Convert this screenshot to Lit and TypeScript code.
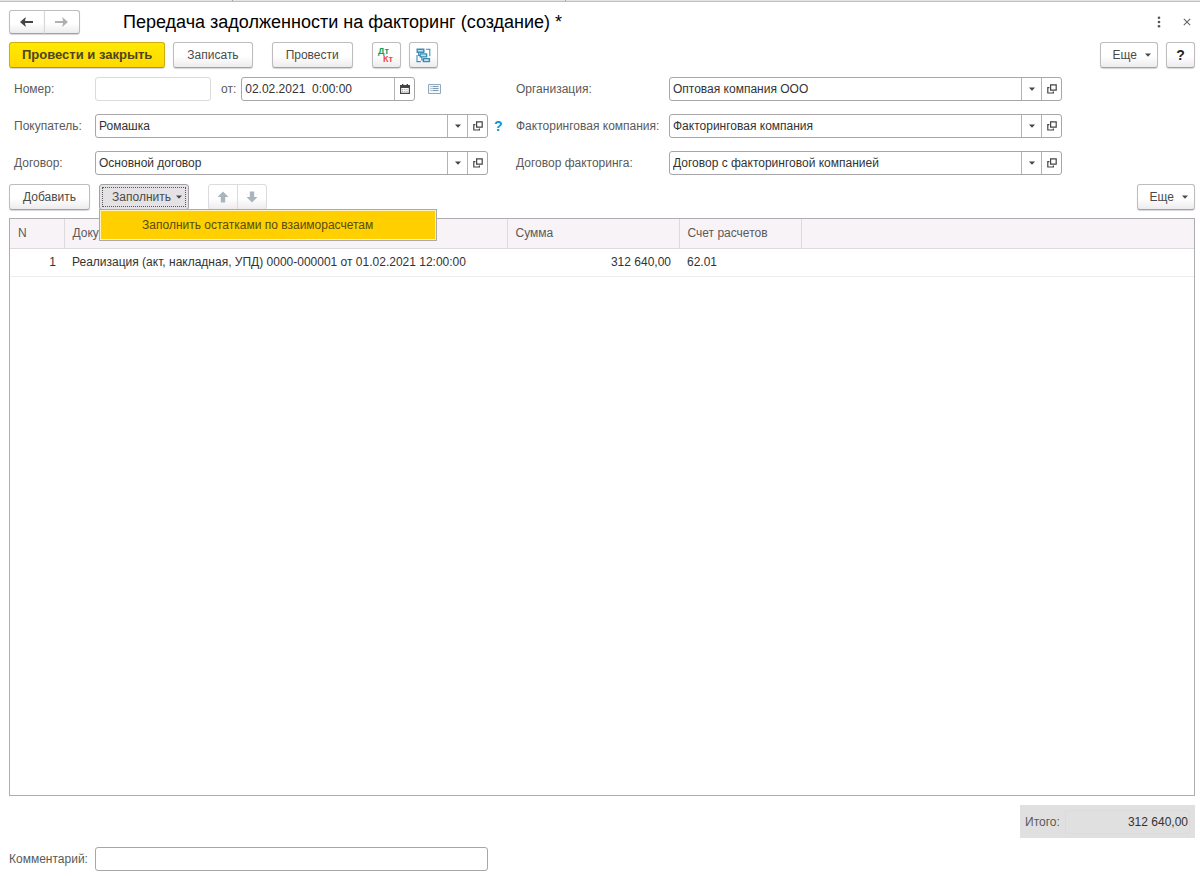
import { LitElement, html, css, svg, nothing } from "lit";
import { customElement, state } from "lit/decorators.js";

interface Row {
  n: number;
  doc: string;
  sum: string;
  account: string;
}

const caret = html`<svg class="caret" width="6" height="4" viewBox="0 0 6 4" aria-hidden="true"><path d="M0 0.5h6L3 3.8z" fill="currentColor" /></svg>`;

const openIcon = html`<svg width="10" height="10" viewBox="0 0 10 10" aria-hidden="true" fill="none" stroke="#444" stroke-width="1.2"><path d="M3.6 0.8h5.6v5.4H3.6z" /><path d="M2.4 3.6H0.8v5.4h5.6V7.6" /></svg>`;

const arrow = (d: string, fill: string, w = 14, h = 12) =>
  html`<svg width=${w} height=${h} viewBox="0 0 ${w} ${h}" aria-hidden="true">${svg`<path d=${d} fill=${fill} />`}</svg>`;

@customElement("app-root")
export class AppRoot extends LitElement {
  @state() private menuOpen = true;

  private rows: Row[] = [
    {
      n: 1,
      doc: "Реализация (акт, накладная, УПД) 0000-000001 от 01.02.2021 12:00:00",
      sum: "312 640,00",
      account: "62.01",
    },
  ];

  static styles = css`
    :host {
      display: flex;
      flex-direction: column;
      min-height: 100vh;
      box-sizing: border-box;
      background: #fff;
      color: #333;
      font: 12px/16px "Liberation Sans", Arial, sans-serif;
    }
    * { box-sizing: border-box; }
    button, input { font: inherit; color: inherit; margin: 0; }
    button { cursor: pointer; }
    svg { display: block; }
    .tabs { display: flex; height: 2px; background: #e6e3e3; border-bottom: 1px solid #c2bebe; }
    .tab { border-right: 1px solid #a5a1a1; width: 333px; }
    .tab.first { width: 233px; }
    .page { flex: 1; display: flex; flex-direction: column; padding: 7px 5px 5px 9px; }
    .bar { display: flex; align-items: center; }
    .spacer { flex: 1; }

    .title-bar { height: 25px; }
    .title { margin: 0 0 0 43px; font-size: 18px; line-height: 24px; font-weight: 400; color: #000; white-space: nowrap; }
    .group { display: flex; }
    .btn {
      display: inline-flex; align-items: center; justify-content: center;
      height: 26px; padding: 0 13px; gap: 5px; white-space: nowrap;
      color: #4a4a4a;
      background: linear-gradient(#fff 55%, #eeebee);
      border: 1px solid #bfbcbf; border-bottom-color: #a3a0a3; border-radius: 3px;
      box-shadow: 0 1px 1px #d8d6d8;
    }
    .group .btn { border-radius: 3px 0 0 3px; width: 36px; padding: 0; height: 24px; }
    .group .btn + .btn { border-radius: 0 3px 3px 0; border-left-color: #d8d5d8; margin-left: -1px; }
    .ghost { background: none; border: 0; padding: 0; width: 16px; height: 24px; display: flex; align-items: center; justify-content: center; }
    .title-bar .ghost + .ghost { margin: 0 0 0 12px; }

    .commands { margin-top: 8px; }
    .primary {
      font-weight: 700; font-size: 13px; color: #4c4522; padding: 0 12px;
      background: linear-gradient(#ffe900, #ffd800);
      border-color: #cfae10; border-bottom-color: #b89600;
    }
    .save, .gap { margin-left: 8px; }
    .post { margin-left: 19px; }
    .square { width: 29px; padding: 0; }
    .more { padding: 0 6px 0 12px; gap: 8px; }
    .help { font-weight: 700; font-size: 14px; color: #222; }
    .ledger { margin-left: 19px; }

    .form {
      display: grid;
      grid-template-columns: 86px minmax(0, 393px) 28px 153px minmax(0, 393px) 1fr;
      row-gap: 13px;
      margin-top: 9px;
      align-items: center;
    }
    .form label, .comment label, .total label { color: #5a5a5a; white-space: nowrap; }
    .form .lead { padding-left: 5px; grid-column: 1; }
    .field {
      display: flex; height: 24px; min-width: 0;
      border: 1px solid #a8a6a8; border-radius: 3px; background: #fff;
    }
    .field input { flex: 1; min-width: 0; border: 0; outline: 0; background: none; padding: 0 3px; }
    .field button {
      width: 20px; flex: none; padding: 0; border: 0; border-left: 1px solid #b4b2b4; background: none;
      display: flex; align-items: center; justify-content: center; color: #444;
    }
    .field.left { grid-column: 2; }
    .field.right { grid-column: 5; }
    .form .right-label { grid-column: 4; }
    .number-row { display: flex; align-items: center; }
    .field.number { width: 116px; border-color: #dcdadc; }
    .number-row label { margin: 0 5px 0 10px; }
    .date { width: 174px; }
    .date input { white-space: pre; }
    .number-row .ghost { margin-left: 11px; }
    .hint { grid-column: 3; color: #0a94d6; font: 700 14px/16px "Liberation Sans", Arial, sans-serif; text-decoration: none; padding-left: 6px; }

    .table-bar { margin-top: 9px; }
    .menu-host { position: relative; margin-left: 9px; }
    .btn.pressed {
      background: #e4e2e4; border-color: #a3a0a3; padding: 0 6px 0 12px; box-shadow: none;
      outline: 1px dotted #555; outline-offset: -4px;
    }
    .menu {
      position: absolute; z-index: 2; top: 25px; left: 0; width: 338px;
      border: 1px solid #aaa; background: #fff3c0; padding: 1px;
    }
    .menu button { width: 100%; height: 28px; border: 0; background: #ffcf00; text-align: left; padding: 0 0 0 41px; color: #574a14; }
    .group.move { margin-left: 19px; }
    .group.move .btn { width: 30px; height: 26px; border-color: #dcdadc; box-shadow: none; }

    .grid { flex: 1; margin-top: 8px; border: 1px solid #aeacae; background: #fff; }
    table { width: 100%; border-collapse: collapse; table-layout: fixed; }
    .c-n { width: 54px; }
    .c-doc { width: 443px; }
    .c-sum { width: 172px; }
    .c-acc { width: 122px; }
    th { height: 29px; padding: 0 8px; text-align: left; font-weight: 400; color: #5a5a5a; background: #f8f3f7; border-right: 1px solid #dddadd; border-bottom: 1px solid #dddadd; }
    th:last-child { border-right: 0; }
    td { height: 28px; padding: 0 8px; border-bottom: 1px solid #efeded; white-space: nowrap; }
    .num { text-align: right; }

    .total { align-self: flex-end; margin-top: 9px; display: flex; align-items: center; width: 175px; height: 33px; padding: 0 5px; background: #e0e0e0; }
    .total input { flex: 1; min-width: 0; margin-left: 5px; height: 24px; border: 1px solid #dbdbdb; border-radius: 3px; background: none; text-align: right; padding: 0 1px; }
    .comment { margin-top: 9px; display: grid; grid-template-columns: 86px minmax(0, 393px); align-items: center; }
  `;

  private combo(id: string, label: string, value: string, side: "left" | "right") {
    return html`
      <label class=${side === "left" ? "lead" : "right-label"} for=${id}>${label}</label>
      <div class="field ${side}">
        <input id=${id} type="text" .value=${value} />
        <button aria-label="Выбрать">${caret}</button>
        <button aria-label="Открыть">${openIcon}</button>
      </div>
    `;
  }

  render() {
    return html`
      <div class="tabs"><span class="tab first"></span><span class="tab"></span></div>
      <main class="page">
        <header class="bar title-bar">
          <div class="group">
            <button class="btn" aria-label="Назад">${arrow("M0 6L5.8 1L5 4.9H13V7.1H5L5.8 11z", "#444")}</button>
            <button class="btn" aria-label="Вперед">${arrow("M13 6L7.2 1L8 4.9H0V7.1H8L7.2 11z", "#b0b0b0")}</button>
          </div>
          <h1 class="title">Передача задолженности на факторинг (создание) *</h1>
          <span class="spacer"></span>
          <button class="ghost" aria-label="Меню">
            <svg width="4" height="12" viewBox="0 0 4 12" fill="#555"><circle cx="2" cy="1.7" r="1.3" /><circle cx="2" cy="6" r="1.3" /><circle cx="2" cy="10.3" r="1.3" /></svg>
          </button>
          <button class="ghost" aria-label="Закрыть">
            <svg width="8" height="8" viewBox="0 0 8 8" stroke="#666" stroke-width="1.1"><path d="M0.8 0.8l6.4 6.4M7.2 0.8L0.8 7.2" /></svg>
          </button>
        </header>

        <div class="bar commands">
          <button class="btn primary">Провести и закрыть</button>
          <button class="btn save">Записать</button>
          <button class="btn post">Провести</button>
          <button class="btn square ledger" aria-label="Проводки">
            <svg width="20" height="18" viewBox="0 0 20 18" font-family="Liberation Sans, Arial, sans-serif" font-weight="700" font-size="9">
              <text x="2" y="8" fill="#0aa45a">Дт</text>
              <text x="7" y="16" fill="#f04848">Кт</text>
            </svg>
          </button>
          <button class="btn square gap" aria-label="Структура подчиненности">
            <svg width="15" height="15" viewBox="0 0 15 15" fill="none" stroke="#3a8db5" stroke-width="1.4">
              <path d="M1.2 1.2h6.6v3H1.2zM4.2 5.9h6.4v3H4.2zM7.4 10.6h6v3h-6z" fill="#c4e2ef" />
              <path d="M10 1.2h3.8v7M1 7v6.6h3.8M2.6 4.2v3.2h1.6M5.8 8.8v3.2h1.6" stroke-width="1.1" />
            </svg>
          </button>
          <span class="spacer"></span>
          <button class="btn more">Еще ${caret}</button>
          <button class="btn square help gap" aria-label="Справка">?</button>
        </div>

        <section class="form">
          <label class="lead" for="number">Номер:</label>
          <div class="number-row">
            <div class="field number"><input id="number" type="text" /></div>
            <label for="date">от:</label>
            <div class="field date">
              <input id="date" type="text" .value=${"02.02.2021  0:00:00"} />
              <button aria-label="Календарь">
                <svg width="10" height="10" viewBox="0 0 10 10"><path d="M0.6 1.6h8.8v7.8H0.6z" fill="#fff" stroke="#444" stroke-width="1.2" /><path d="M0 1h10v3H0z" fill="#444" /><path d="M2 0h1.4v2H2zM6.6 0H8v2H6.6z" fill="#444" /><path d="M2 5.6h6M2 7.4h6" stroke="#999" stroke-width="0.9" stroke-dasharray="1.2 1" /></svg>
              </button>
            </div>
            <button class="ghost" aria-label="Список">
              <svg width="13" height="10" viewBox="0 0 13 10"><path d="M0.5 0.5h12v9H0.5z" fill="#f1f6fa" stroke="#93a9bb" /><path d="M2.5 2.5h1M4.5 2.5h6M2.5 4.5h1M4.5 4.5h6M2.5 6.5h1M4.5 6.5h6" stroke="#7f9bb3" /></svg>
            </button>
          </div>
          ${this.combo("org", "Организация:", "Оптовая компания ООО", "right")}
          ${this.combo("buyer", "Покупатель:", "Ромашка", "left")}
          <a class="hint" href="#" aria-label="Подсказка">?</a>
          ${this.combo("factor", "Факторинговая компания:", "Факторинговая компания", "right")}
          ${this.combo("contract", "Договор:", "Основной договор", "left")}
          ${this.combo("fcontract", "Договор факторинга:", "Договор с факторинговой компанией", "right")}
        </section>

        <div class="bar table-bar">
          <button class="btn">Добавить</button>
          <div class="menu-host">
            <button class="btn pressed" aria-haspopup="menu" aria-expanded=${this.menuOpen} @click=${() => (this.menuOpen = !this.menuOpen)}>Заполнить ${caret}</button>
            ${this.menuOpen
              ? html`<div class="menu" role="menu"><button role="menuitem">Заполнить остатками по взаиморасчетам</button></div>`
              : nothing}
          </div>
          <div class="group move">
            <button class="btn" aria-label="Вверх">${arrow("M6 0.5L11.5 6H8.2V11.5H3.8V6H0.5z", "#a9b4bf", 12, 12)}</button>
            <button class="btn" aria-label="Вниз">${arrow("M6 11.5L0.5 6H3.8V0.5H8.2V6H11.5z", "#a9b4bf", 12, 12)}</button>
          </div>
          <span class="spacer"></span>
          <button class="btn more">Еще ${caret}</button>
        </div>

        <div class="grid">
          <table>
            <colgroup><col class="c-n" /><col class="c-doc" /><col class="c-sum" /><col class="c-acc" /><col /></colgroup>
            <thead>
              <tr><th>N</th><th>Документ</th><th>Сумма</th><th>Счет расчетов</th><th></th></tr>
            </thead>
            <tbody>
              ${this.rows.map(
                (r) => html`<tr><td class="num">${r.n}</td><td>${r.doc}</td><td class="num">${r.sum}</td><td>${r.account}</td><td></td></tr>`
              )}
            </tbody>
          </table>
        </div>

        <div class="total">
          <label for="total">Итого:</label>
          <input id="total" type="text" readonly .value=${"312 640,00"} />
        </div>
        <div class="comment">
          <label for="comment">Комментарий:</label>
          <div class="field"><input id="comment" type="text" /></div>
        </div>
      </main>
    `;
  }
}
